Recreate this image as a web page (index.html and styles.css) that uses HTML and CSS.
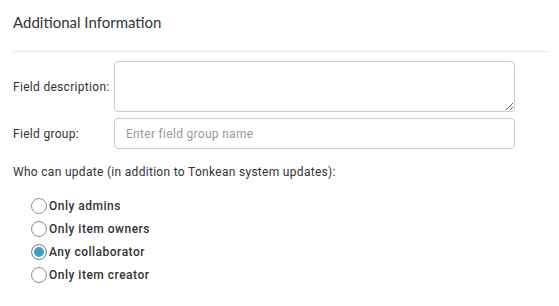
FILE: index.html
```html
<!DOCTYPE html>
<html lang="en">
<head>
    <meta charset="UTF-8">
    <title>Additional Information</title>
    <link rel="stylesheet" href="styles.css">
</head>
<body>
<div id="panel">
    <h3 class="panelTitle">Additional Information</h3>
    <div class="formRow">
        <label class="rowLabel" for="fieldDescription">Field description:</label>
        <textarea id="fieldDescription" class="fieldControl fieldArea"></textarea>
    </div>
    <div class="formRow">
        <label class="rowLabel" for="fieldGroup">Field group:</label>
        <input id="fieldGroup" class="fieldControl fieldInput" type="text" placeholder="Enter field group name">
    </div>
    <div class="updateTitle">Who can update (in addition to Tonkean system updates):</div>
    <div class="radioList">
        <label class="radioItem"><input type="radio" name="updaters" value="admins"><span>Only admins</span></label>
        <label class="radioItem"><input type="radio" name="updaters" value="owners"><span>Only item owners</span></label>
        <label class="radioItem"><input type="radio" name="updaters" value="collaborators" checked><span>Any collaborator</span></label>
        <label class="radioItem"><input type="radio" name="updaters" value="creator"><span>Only item creator</span></label>
    </div>
</div>
</body>
</html>
```

FILE: styles.css
```css
body {
    margin: 0;
    padding: 0;
    background-color: #ffffff;
    font-family: 'Roboto', sans-serif;
    font-size: 12px;
    letter-spacing: 0.3px;
    color: #333333;
}
#panel {
    width: 535px;
    padding: 0 0 0 13px;
}
.panelTitle {
    font-family: 'Lato', sans-serif;
    font-weight: 400;
    font-size: 15px;
    letter-spacing: 0;
    color: #333333;
    margin: 0;
    padding: 13px 0 20px 0;
    border-bottom: 1px solid #e8e8e8;
    margin-bottom: 9px;
}
.formRow {
    display: flex;
    align-items: center;
    margin-bottom: 6px;
}
.rowLabel {
    width: 101px;
    flex-shrink: 0;
}
.fieldControl {
    box-sizing: border-box;
    width: 401px;
    border: 1px solid #cccccc;
    border-radius: 4px;
    font-family: 'Roboto', sans-serif;
    font-size: 12px;
    letter-spacing: 0.3px;
    color: #333333;
    margin: 0;
}
.fieldArea {
    height: 51px;
    resize: vertical;
    padding: 6px 11px;
}
.fieldInput {
    height: 31px;
    padding: 0 11px;
}
.fieldInput::placeholder {
    color: #999999;
}
.updateTitle {
    margin-top: 16px;
}
.radioList {
    display: flex;
    flex-direction: column;
    gap: 7px;
    padding: 19px 0 0 18px;
}
.radioItem {
    display: flex;
    align-items: center;
    gap: 2px;
    font-weight: 500;
    letter-spacing: 0.5px;
    height: 16px;
}
.radioItem input {
    appearance: none;
    -webkit-appearance: none;
    margin: 0;
    width: 16px;
    height: 16px;
    border: 1px solid #8f8f8f;
    border-radius: 50%;
    background-color: #ffffff;
    box-sizing: border-box;
}
.radioItem input:checked {
    background-color: #3aa5bd;
    box-shadow: inset 0 0 0 2px #ffffff;
}
```
